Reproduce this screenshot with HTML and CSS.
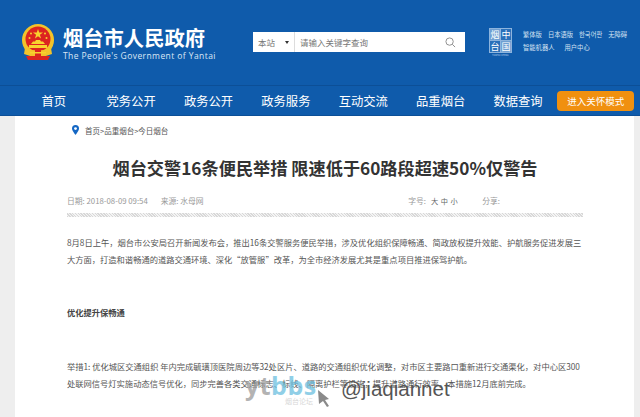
FILE: index.html
```html
<!DOCTYPE html>
<html lang="zh-CN">
<head>
  <meta charset="UTF-8" />
  <title>烟台市人民政府</title>
  <link rel="stylesheet" href="styles.css">
</head>
<body>
  <header class="top">
    <div class="brand">
      <svg class="emblem" viewBox="0 0 34 37" width="34" height="37">
        <circle cx="17" cy="16" r="16" fill="#f3c32a"/>
        <circle cx="17" cy="15" r="12.5" fill="#dc2420"/>
        <polygon points="17,5 18.2,8.6 22,8.6 18.9,10.8 20.1,14.4 17,12.2 13.9,14.4 15.1,10.8 12,8.6 15.8,8.6" fill="#f8d22e"/>
        <circle cx="10" cy="9.5" r="1" fill="#f8d22e"/>
        <circle cx="24" cy="9.5" r="1" fill="#f8d22e"/>
        <circle cx="8.5" cy="14" r="1" fill="#f8d22e"/>
        <circle cx="25.5" cy="14" r="1" fill="#f8d22e"/>
        <path d="M10 20h14l-2-2.5h-2l-1-1.500h-4l-1 1.500h-2z" fill="#f8d22e"/>
        <rect x="8" y="21" width="18" height="3" fill="#f8d22e"/>
        <path d="M4 24q13 5 26 0l1 6q-14 6-28 0z" fill="#f3c32a"/>
        <path d="M5 32h24l-2 4H7z" fill="#dc2420"/>
        <rect x="14" y="26" width="6" height="9" fill="#dc2420"/>
        <rect x="9" y="28" width="16" height="1.500" fill="#f8d22e"/>
      </svg>
      <div class="brand-text">
        <div class="brand-cn">烟台市人民政府</div>
        <div class="brand-en">The People's Government of Yantai</div>
      </div>
    </div>
    <form class="search">
      <div class="search-scope">本站<span class="caret"></span></div>
      <div class="search-input">请输入关键字查询</div>
      <svg class="search-icon" viewBox="0 0 12 12" width="11" height="11">
        <circle cx="5" cy="5" r="4" fill="none" stroke="#888" stroke-width="1"/>
        <line x1="8" y1="8" x2="11" y2="11" stroke="#888" stroke-width="1"/>
      </svg>
    </form>
    <div class="seal">
      <div class="seal-grid">
        <span class="seal-cell">烟</span>
        <span class="seal-cell seal-dark">中</span>
        <span class="seal-cell seal-dark">台</span>
        <span class="seal-cell">国</span>
      </div>
      <div class="seal-en">YANTAI CHINA</div>
    </div>
    <div class="quick">
      <div class="quick-row">
        <a>繁体版</a><a>日本语版</a><a>한국어판</a><a>无障碍</a>
      </div>
      <div class="quick-row quick-row-wide">
        <a>智能机器人</a><a>用户中心</a>
      </div>
    </div>
  </header>

  <nav class="nav">
    <a class="nav-item">首页</a>
    <a class="nav-item">党务公开</a>
    <a class="nav-item">政务公开</a>
    <a class="nav-item">政务服务</a>
    <a class="nav-item">互动交流</a>
    <a class="nav-item">品重烟台</a>
    <a class="nav-item">数据查询</a>
    <a class="care-btn">进入关怀模式</a>
  </nav>

  <main class="page">
    <div class="crumbs">
      <svg class="pin" viewBox="0 0 10 14" width="7" height="10">
        <path d="M5 0a5 5 0 0 1 5 5c0 3.500-5 9-5 9S0 8.500 0 5a5 5 0 0 1 5-5z" fill="#1467c4"/>
        <circle cx="5" cy="5" r="2" fill="#fff"/>
      </svg>
      <span>首页&gt;品重烟台&gt;今日烟台</span>
    </div>

    <h1 class="title">烟台交警16条便民举措 限速低于60路段超速50%仅警告</h1>

    <div class="meta">
      <div class="meta-left">
        <span>日期: 2018-08-09 09:54</span>
        <span>来源: 水母网</span>
      </div>
      <div class="meta-right">
        <span>字号:</span>
        <span class="sizes">大 中 小</span>
        <span class="share">分享:</span>
      </div>
    </div>
    <div class="divider"></div>

    <article class="article">
      <p>8月8日上午&#xFF0C;烟台市公安局召开新闻发布会&#xFF0C;推出16条交警服务便民举措&#xFF0C;涉及优化组织保障畅通、简政放权提升效能、护航服务促进发展三大方面&#xFF0C;打造和谐畅通的道路交通环境、深化“放管服”改革&#xFF0C;为全市经济发展尤其是重点项目推进保驾护航。</p>
      <p class="lead">优化提升保畅通</p>
      <p>举措1: 优化城区交通组织 年内完成毓璜顶医院周边等32处区片、道路的交通组织优化调整&#xFF0C;对市区主要路口重新进行交通渠化&#xFF0C;对中心区300处联网信号灯实施动态信号优化&#xFF0C;同步完善各类交通标志、标线、隔离护栏等设施&#xFF0C;提升道路通行效率。本措施12月底前完成。</p>
    </article>
  </main>

  <div class="mark">
    <div class="mark-logo"><span class="mark-yt">yt</span><span class="mark-bbs">bbs</span></div>
    <div class="mark-sub">烟台论坛</div>
  </div>
  <svg class="mark-cursor" viewBox="0 0 12 17" width="12" height="17">
    <path d="M0 0l11 9-4 1 4 6-2 1-4-6-4 3z" fill="#8a8a8a"/>
  </svg>
  <div class="mark-user">@jiaqiannet</div>
</body>
</html>
```

FILE: styles.css
```css
html, body {
  height: 100%;
}

body {
  margin: 0;
  overflow: hidden;
  background-color: #eeeeee;
  font-family: "Noto Sans CJK SC", "Noto Sans", sans-serif;
  color: #333;
}

a { color: inherit; text-decoration: none; }

.top {
  display: flex;
  height: 85px;
  background-color: #0f5bab;
  color: #fff;
}

.brand {
  display: flex;
  gap: 8px;
  width: 253px;
  box-sizing: border-box;
  padding: 24px 0 0 21px;
}

.brand-cn {
  font-size: 20.300px;
  font-weight: 700;
  line-height: 26px;
  white-space: nowrap;
}

.brand-en {
  font-family: "Open Sans", sans-serif;
  font-size: 8.500px;
  letter-spacing: 0.42px;
  line-height: 12px;
  white-space: nowrap;
  color: #dbe7f5;
}

.search {
  display: flex;
  align-items: center;
  width: 212px;
  height: 20px;
  margin-top: 32px;
  background-color: #fff;
  color: #777;
  font-size: 8.500px;
}

.search-scope {
  display: flex;
  align-items: center;
  justify-content: space-between;
  width: 42px;
  box-sizing: border-box;
  height: 100%;
  padding: 0 5px;
  border-right: 1px solid #ddd;
}

.caret {
  border-left: 2.500px solid transparent;
  border-right: 2.500px solid transparent;
  border-top: 3px solid #333;
}

.search-input {
  flex: 1;
  padding-left: 5px;
}

.search-icon {
  margin-right: 9px;
}

.seal {
  width: 23px;
  margin: 28px 0 0 24px;
}

.seal-grid {
  display: grid;
  grid-template-columns: 1fr 1fr;
  gap: 1px;
  height: 25px;
  padding: 1px;
  box-sizing: border-box;
  background-color: #8db4dd;
}

.seal-cell {
  display: flex;
  align-items: center;
  justify-content: center;
  font-size: 9px;
  line-height: 1;
  color: #fff;
  background-color: #6f9fd2;
  overflow: hidden;
}

.seal-dark {
  background-color: #2a70ba;
}

.seal-en {
  font-size: 2.500px;
  line-height: 4px;
  text-align: center;
  white-space: nowrap;
  color: #c5d9ee;
}

.quick {
  margin: 29px 0 0 11px;
  font-size: 6.300px;
  color: #d5e3f3;
}

.quick-row {
  display: flex;
  gap: 6px;
  height: 12.500px;
  line-height: 11px;
  white-space: nowrap;
}

.quick-row-wide {
  gap: 10px;
}

.nav {
  display: flex;
  align-items: center;
  padding-left: 15px;
  background-color: #0f5bab;
  border-top: 1px solid #0c4f97;
  border-bottom: 1px solid #0c4f97;
  box-sizing: border-box;
  height: 31px;
  color: #fff;
  font-size: 12.300px;
}

.nav-item {
  width: 77.400px;
  text-align: center;
  white-space: nowrap;
}

.care-btn {
  width: 77px;
  height: 20px;
  line-height: 20px;
  margin-left: 0.500px;
  text-align: center;
  font-size: 9.500px;
  border-radius: 4px;
  background-color: #f0900f;
}

.page {
  width: 619px;
  height: 301px;
  margin-left: 15px;
  padding: 0 51px 0 52px;
  box-sizing: border-box;
  overflow: hidden;
  background-color: #fff;
}

.crumbs {
  display: flex;
  align-items: center;
  gap: 6px;
  height: 14px;
  padding: 7px 0 0 5px;
  font-size: 7.500px;
  color: #555;
}

.title {
  margin: 18px 0 0;
  font-size: 17.200px;
  font-weight: 700;
  line-height: 26px;
  text-align: center;
  white-space: nowrap;
  color: #333;
}

.meta {
  display: flex;
  justify-content: space-between;
  margin-top: 14px;
  height: 12px;
  line-height: 12px;
  font-size: 7.800px;
  color: #999;
}

.meta-left {
  display: flex;
  gap: 13px;
}

.meta-right {
  display: flex;
  gap: 5px;
  padding-right: 83px;
}

.sizes {
  font-size: 7.200px;
  letter-spacing: 0.500px;
  color: #666;
}

.share {
  margin-left: 19px;
}

.divider {
  height: 4px;
  margin-top: 6px;
  background: repeating-linear-gradient(45deg, #d8d8d8 0 1px, #f4f4f4 1px 2px);
}

.article {
  margin-top: 17px;
  font-size: 8.270px;
  line-height: 17px;
  color: #555;
}

.article p {
  margin: 0;
}

.article .lead {
  margin: 36px 0 37px;
  font-weight: 700;
  color: #444;
}

.mark {
  position: absolute;
  left: 245px;
  top: 373px;
}

.mark-logo {
  font-family: "Open Sans", sans-serif;
  font-size: 25px;
  font-weight: 700;
  line-height: 24px;
  letter-spacing: 0.500px;
  opacity: 0.75;
}

.mark-yt { color: #9a9a9a; }
.mark-bbs { color: #6cc0e0; }

.mark-sub {
  margin-left: 40px;
  font-size: 7px;
  line-height: 8px;
  color: #d8d8d8;
}

.mark-cursor {
  position: absolute;
  left: 318px;
  top: 390px;
}

.mark-user {
  position: absolute;
  left: 341px;
  top: 377px;
  font-family: "Liberation Sans", sans-serif;
  font-size: 20.500px;
  line-height: 24px;
  color: #555;
}
```
